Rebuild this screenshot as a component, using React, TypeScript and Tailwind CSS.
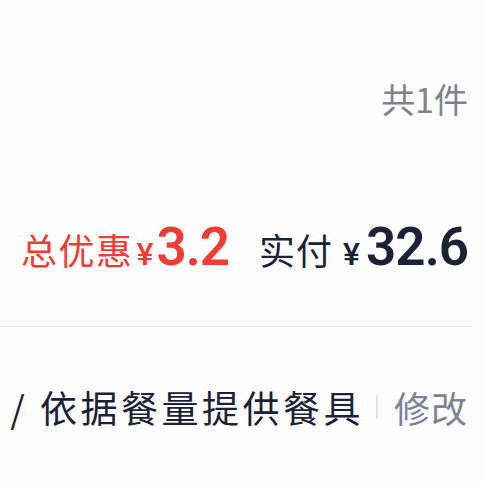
import React from 'react';

const cjk = "font-['Noto_Sans_CJK_SC','Noto_Sans',sans-serif]";
const num = "font-['Roboto','Noto_Sans',sans-serif]";

const OrderSummary: React.FC = () => {
  return (
    <div className={`w-[484px] h-[484px] overflow-hidden bg-[#fdfdfd] ${cjk}`}>
      {/* item count */}
      <div className="flex justify-end pr-[16px] pt-[79px] h-[122px]">
        <span className="text-[34px] leading-[40px] text-[#7b8291]">共1件</span>
      </div>

      {/* discount + paid amount */}
      <div className="flex items-baseline justify-end pr-[16px] pt-[100px] h-[204px]">
        <span className="text-[36px] leading-[40px] tracking-[1.5px] text-[#ee3d35]">总优惠</span>
        <span className={`${num} ml-[3px] text-[32px] font-medium text-[#ee3d35]`}>¥</span>
        <span className={`${num} ml-[3px] text-[53px] leading-[50px] font-semibold tracking-[-1px] text-[#ee3d35]`}>3.2</span>
        <span className="ml-[30px] text-[36px] leading-[40px] tracking-[1px] text-[#1b2235]">实付</span>
        <span className={`${num} ml-[10px] text-[32px] font-medium text-[#1b2235]`}>¥</span>
        <span className={`${num} ml-[6px] text-[53px] leading-[50px] font-semibold tracking-[-1px] text-[#1b2235]`}>32.6</span>
      </div>

      <div className="mr-[13px] h-px bg-[#e1e4e9]" />

      {/* tableware note */}
      <div className="flex items-center justify-end pr-[16px] pt-[60px]">
        <span className="text-[37px] leading-[40px] tracking-[3.5px] text-[#1b2235] whitespace-nowrap">/ 依据餐量提供餐具</span>
        <span className="ml-[12px] w-[2px] h-[24px] bg-[#e3e5e9]" />
        <span className="ml-[16px] text-[36px] leading-[40px] tracking-[1px] text-[#7b8291]">修改</span>
      </div>
    </div>
  );
};

export default function App() {
  return <OrderSummary />;
}
